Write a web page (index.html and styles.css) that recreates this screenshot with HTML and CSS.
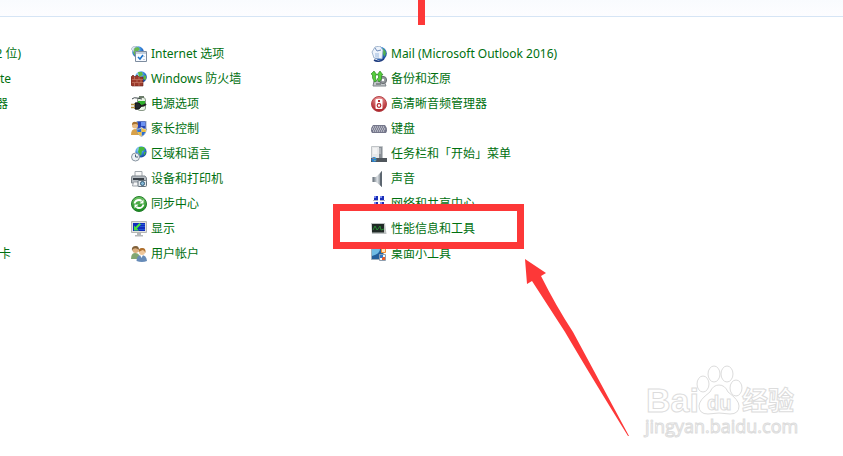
FILE: index.html
```
<!DOCTYPE html>
<html lang="zh-CN">
<head>
    <meta charset="UTF-8">
    <meta name="viewport" content="width=device-width, initial-scale=1.0">
    <title>控制面板</title>
    <link rel="stylesheet" href="styles.css">
</head>
<body>
    <svg class="defs" aria-hidden="true">
        <defs>
            <radialGradient id="globe" cx=".35" cy=".3" r=".75">
                <stop offset="0" stop-color="#b8ecff"/>
                <stop offset=".5" stop-color="#3d8fe0"/>
                <stop offset="1" stop-color="#123f9c"/>
            </radialGradient>
            <radialGradient id="red" cx=".5" cy=".2" r=".8">
                <stop offset="0" stop-color="#f4a5a5"/>
                <stop offset="1" stop-color="#a9191f"/>
            </radialGradient>
            <linearGradient id="sync" x2="0" y2="1">
                <stop offset="0" stop-color="#72c466"/>
                <stop offset="1" stop-color="#168a1d"/>
            </linearGradient>
            <linearGradient id="metal">
                <stop offset="0" stop-color="#5c6670"/>
                <stop offset=".5" stop-color="#dde2e6"/>
                <stop offset="1" stop-color="#69737c"/>
            </linearGradient>
        </defs>
    </svg>

    <header class="toolbar"></header>

    <main class="panel">
        <ul class="column cut">
            <li class="wide"><a href="#">2 位)</a></li>
            <li><a href="#">te</a></li>
            <li class="narrow"><a href="#">器</a></li>
            <li></li>
            <li></li>
            <li></li>
            <li></li>
            <li></li>
            <li><a href="#">卡</a></li>
        </ul>

        <ul class="column">
            <li>
                <svg class="icon" viewBox="0 0 16 16">
                    <circle cx="7" cy="6" r="5.8" fill="url(#globe)"/>
                    <path d="M3 2l4-1 2 2-3 3-2 4-2-4z" fill="#67b84d"/>
                    <path d="M0 3q2-4 6-3Q2 2 3 6z" fill="#dce6ef" stroke="#8ea0b3" stroke-width=".5"/>
                    <path d="M4.500 5.500h11v10h-11z" fill="#f7faff" stroke="#7d8c9f"/>
                    <path d="M5 6h10v2H5z" fill="#c3cfdd"/>
                    <path d="M7 11l2 2 3-4" fill="none" stroke="#1672cc" stroke-width="1.500"/>
                    <path d="M13 10v1M13 13v1" stroke="#8fa3bc"/>
                </svg>
                <a href="#">Internet 选项</a>
            </li>
            <li>
                <svg class="icon" viewBox="0 0 16 16">
                    <circle cx="10" cy="6" r="5.800" fill="url(#globe)"/>
                    <path d="M7 1l4 0 1 3-4 2zM13 4l2 1v4l-3-1z" fill="#5dbb45"/>
                    <path d="M0 6l2-2 2 2 2-2 2 2h4v9H1L0 14z" fill="#9c3a2b" stroke="#64231b" stroke-width=".6"/>
                    <path d="M1 8.500h11M1 11.500h11M3.500 6v2.500M8 6v2.500M6 9v2.500M10 9v2.500M3.500 12v3M8 12v3" stroke="#d08a74" stroke-width=".6"/>
                </svg>
                <a href="#">Windows 防火墙</a>
            </li>
            <li>
                <svg class="icon" viewBox="0 0 16 16">
                    <rect x="6.500" y="1.500" width="8" height="13" rx="2.500" fill="#e9f3e5" stroke="#8a9a88"/>
                    <rect x="8" y="0" width="5" height="2" fill="#6b7c69"/>
                    <path d="M7 5h7v5H7z" fill="#2fae2b"/>
                    <path d="M4 7q5-1 6 3-1 4-6 3z" fill="#24292d" stroke="#111"/>
                    <path d="M0 8.500h4M0 11.500h4" stroke="#b99542" stroke-width="1.500"/>
                    <path d="M10 10q3 0 5-2" fill="none" stroke="#222" stroke-width="1.800"/>
                    <path d="M1 3q2-2 5-1l5 1" fill="none" stroke="#40494c"/>
                </svg>
                <a href="#">电源选项</a>
            </li>
            <li>
                <svg class="icon" viewBox="0 0 16 16">
                    <path d="M6 0h9v9H6z" fill="#2745b7" stroke="#9aabc5"/>
                    <path d="M10 1h4v4h-4z" fill="#6b92f0"/>
                    <circle cx="4" cy="4.500" r="3" fill="#e7bb82"/>
                    <path d="M1 4q0-4 4-3 2 0 2 3-2-2-6 0z" fill="#a6712f"/>
                    <path d="M0 14q0-6 4-6t5 6z" fill="#d8a149"/>
                    <path d="M5.500 8q3 0 5-2 2 2 5 2-1 6-5 7.500-4-1.500-5-7.500z" fill="#f3f5f7" stroke="#7b8998" stroke-width=".6"/>
                    <path d="M10.500 7v4H6.500L6 8.500q3 0 4.500-1.500zM10.500 11h4q-1 3-4 4z" fill="#2e6fce"/>
                    <path d="M10.500 7q2 1.500 4.500 1.500l-.5 2.500h-4zM6.500 11h4v4q-3-1-4-4z" fill="#f0c041"/>
                </svg>
                <a href="#">家长控制</a>
            </li>
            <li>
                <svg class="icon" viewBox="0 0 16 16">
                    <circle cx="10" cy="5.800" r="5.600" fill="url(#globe)"/>
                    <path d="M8 1l5 0 1 3-3 1-1 5-3-4zM13 6l2 0-2 4z" fill="#46b83c"/>
                    <circle cx="4.500" cy="11" r="4" fill="#edf2f6" stroke="#8794a0"/>
                    <path d="M4.500 8.500V11h2.500" fill="none" stroke="#4d6075"/>
                </svg>
                <a href="#">区域和语言</a>
            </li>
            <li>
                <svg class="icon" viewBox="0 0 16 16">
                    <path d="M4 .5h7v6H4z" fill="#fafafa" stroke="#a1a7ad"/>
                    <path d="M1 5h13l1.500 2v5H.5V7z" fill="#b6bcc2" stroke="#7d848b"/>
                    <path d="M2 7h11v2H2z" fill="#3a4148"/>
                    <path d="M2.500 11h6v4h-7z" fill="#f6f7f8" stroke="#9ba1a8"/>
                    <rect x="7" y="9.500" width="8.500" height="6" rx="1" fill="#e3e8ec" stroke="#65717b"/>
                    <circle cx="11.500" cy="12.500" r="2" fill="#86b9d8" stroke="#315975"/>
                </svg>
                <a href="#">设备和打印机</a>
            </li>
            <li>
                <svg class="icon" viewBox="0 0 16 16">
                    <circle cx="8" cy="8" r="7.500" fill="url(#sync)" stroke="#227d2a"/>
                    <path d="M3.500 7.500Q4.500 4 8 4q1.500 0 2.500 1M12.500 8.500Q11.500 12 8 12q-1.500 0-2.500-1" fill="none" stroke="#fff" stroke-width="1.800"/>
                    <path d="M12.500 3.500v4H8.500zM3.500 12.500v-4h4z" fill="#fff"/>
                </svg>
                <a href="#">同步中心</a>
            </li>
            <li>
                <svg class="icon" viewBox="0 0 16 16">
                    <path d="M.5.500h15v11H.5z" fill="#e1e2df" stroke="#b4b6b5"/>
                    <path d="M2 2h12v8H2z" fill="#102cbc"/>
                    <path d="M7 3.500h7M9 5.500h5M8 8.500h6" stroke="#2b60dd" stroke-width=".8"/>
                    <path d="M3 9.500V4.500l1.500 1.500L8.500 2l1.500 1.500L6 7.500l2 2z" fill="#48e142"/>
                    <path d="M6 12h4v2h2v1.500H4V14h2z" fill="#b5b8b9"/>
                </svg>
                <a href="#">显示</a>
            </li>
            <li>
                <svg class="icon" viewBox="0 0 16 16">
                    <circle cx="4.500" cy="4" r="3" fill="#dcae7e"/>
                    <path d="M1 5q-1-5 4-5 3 0 3 4-3-3-6-1z" fill="#806039"/>
                    <path d="M0 13q0-6 4-6 5 0 5 6z" fill="#82a672"/>
                    <circle cx="11" cy="6" r="3" fill="#efc79b"/>
                    <path d="M7.500 6q0-4.500 4-4 3.500 0 3 5-1-3-3-3-2 1-4 2z" fill="#b0702d"/>
                    <path d="M5.500 15q0-6 5-6t5.500 6q-5 2-10.500 0z" fill="#668bb8"/>
                    <path d="M9 9h3l-1.500 3z" fill="#fff"/>
                </svg>
                <a href="#">用户帐户</a>
            </li>
        </ul>

        <ul class="column">
            <li>
                <svg class="icon" viewBox="0 0 16 16">
                    <circle cx="9" cy="7.500" r="6.800" fill="url(#globe)"/>
                    <path d="M12 2l3 4-1 5-2-3z" fill="#4eae51"/>
                    <path d="M1 6l3-5 5-1 3 4-1 9-8-1z" fill="#edf3fb" stroke="#91a7c3" stroke-width=".8"/>
                    <path d="M4 2l2 3 4-1" fill="none" stroke="#6f8cba"/>
                    <path d="M4 7l4 0 0 5-4-1z" fill="#c3d5ec"/>
                    <path d="M3 14q5 3 10-1" fill="none" stroke="#203e80" stroke-width="1.500"/>
                </svg>
                <a href="#">Mail (Microsoft Outlook 2016)</a>
            </li>
            <li>
                <svg class="icon" viewBox="0 0 16 16">
                    <path d="M3 10h10l2 5H2z" fill="#c3c7ca" stroke="#7c8287"/>
                    <circle cx="12" cy="9" r="3.600" fill="#92979b" stroke="#686d71"/>
                    <circle cx="12" cy="9" r="1.200" fill="#fff"/>
                    <path d="M0 3l3-3 3 4H4.500v3l1 3-2 1-2-4V4z" fill="#55ce3b" stroke="#227b1c" stroke-width=".6"/>
                    <path d="M9 0l3 4h-1.500v4L8 11 6 8l1.500-1V4H6z" fill="#55ce3b" stroke="#227b1c" stroke-width=".6"/>
                    <path d="M5 13h5" stroke="#4a5055"/>
                </svg>
                <a href="#">备份和还原</a>
            </li>
            <li>
                <svg class="icon" viewBox="0 0 16 16">
                    <circle cx="8" cy="8" r="7.500" fill="url(#red)" stroke="#b44449"/>
                    <rect x="4.500" y="3" width="7" height="10" rx="1" fill="#fff"/>
                    <rect x="7" y="4" width="2" height="2" fill="#b62c30"/>
                    <circle cx="8" cy="9.500" r="1.800" fill="none" stroke="#b62c30" stroke-width="1.200"/>
                </svg>
                <a href="#">高清晰音频管理器</a>
            </li>
            <li>
                <svg class="icon" viewBox="0 0 16 16">
                    <path d="M2 4h12q2 2 2 6l-1 2H1l-1-2q0-4 2-6z" fill="#74768a"/>
                    <path d="M2 6h12M1 8h14M2 10h12" stroke="#eef0f5" stroke-width="1.200" stroke-dasharray="1.200 .8"/>
                </svg>
                <a href="#">键盘</a>
            </li>
            <li>
                <svg class="icon" viewBox="0 0 16 16">
                    <path d="M.5.500h11v12H.5z" fill="#e7e8e9" stroke="#c0c4c7"/>
                    <path d="M8 1h3v11H8z" fill="#8a9097"/>
                    <path d="M2 3h4M2 5h4M2 7h4" stroke="#fff"/>
                    <path d="M8 3h2M8 5h2M8 7h2" stroke="#d2d6da"/>
                    <path d="M0 12h16v4H0z" fill="#50565c"/>
                    <circle cx="3" cy="13.500" r="2.500" fill="#2b83d2"/>
                    <path d="M1 13l2-1v1z" fill="#ef6845"/>
                    <path d="M3.500 12l1.500 1H3.500z" fill="#80d65a"/>
                    <path d="M3.500 14H5l-1.500 1z" fill="#ffd34a"/>
                </svg>
                <a href="#">任务栏和「开始」菜单</a>
            </li>
            <li>
                <svg class="icon" viewBox="0 0 16 16">
                    <path d="M1.500 6H5l6-6v16l-6-5H1.500z" fill="url(#metal)"/>
                    <path d="M9 2.500L11 0v16l-2-2z" fill="#5c6670"/>
                </svg>
                <a href="#">声音</a>
            </li>
            <li>
                <svg class="icon" viewBox="0 0 16 16">
                    <path d="M3 0h4v4H3zM9 0h4v4H9zM3 6h4v4H3zM9 6h4v4H9z" fill="#1a2fb8"/>
                    <path d="M3 0h2v2H3zM9 0h2v2H9zM3 6h2v2H3zM9 6h2v2H9z" fill="#7c8cf0"/>
                    <path d="M2 4.500h5M9 4.500h5M2 10.500h5M9 10.500h5" stroke="#b0b3bf"/>
                </svg>
                <a href="#">网络和共享中心</a>
            </li>
            <li class="marked">
                <svg class="icon" viewBox="0 0 16 16">
                    <path d="M0 2h14l1.500 11H1z" fill="#bfc3c3"/>
                    <path d="M1 3h12v8.500H1z" fill="#202a26"/>
                    <path d="M2 9l2-4 2 4 1-1 2-3 1 4 3-1" fill="none" stroke="#2b8b35"/>
                </svg>
                <a href="#">性能信息和工具</a>
                <span class="highlight"></span>
            </li>
            <li>
                <svg class="icon" viewBox="0 0 16 16">
                    <path d="M.5 2.500h12v11H.5z" fill="#24609c" stroke="#a1b0ba"/>
                    <path d="M1 3h8q0 5-8 7z" fill="#70bce4"/>
                    <path d="M10.500 2.500h4v4h-4z" fill="#fde3c0" stroke="#f08b2b"/>
                    <path d="M8.500 8.500h6v6h-6z" fill="#f4f7fa" stroke="#8e9eaf"/>
                    <path d="M9 9h3v3H9z" fill="#3478c6"/>
                    <path d="M12 11h2v3h-3v-2z" fill="#ea5a2a"/>
                </svg>
                <a href="#">桌面小工具</a>
            </li>
        </ul>
    </main>

    <!-- annotations drawn over the panel -->
    <span class="stem"></span>
    <svg class="arrow" viewBox="0 0 106 180" aria-hidden="true">
        <path d="M1 1L22 15l-5 3q15 30 32 56l56 104h-1Q68 120 41 74L8 23l-5 3z"/>
    </svg>

    <svg class="watermark" viewBox="0 0 160 76" role="img" aria-label="Baidu 经验">
        <text class="brand" x="4" y="50">Bai</text>
        <ellipse cx="61" cy="22" rx="6" ry="8"/>
        <ellipse cx="72" cy="12" rx="6" ry="8"/>
        <ellipse cx="85" cy="12" rx="6" ry="8"/>
        <ellipse cx="94" cy="26" rx="6" ry="8"/>
        <path d="M77 23q6 0 9 7 11 8 11 14 0 8-9 8-11-2-22 0-9 0-9-8 0-6 11-14 3-7 9-7z"/>
        <text class="du" x="65" y="48">du</text>
        <text class="word" x="100" y="48">经验</text>
        <text class="site" x="3" y="71">jingyan.baidu.com</text>
    </svg>
</body>
</html>
```
FILE: styles.css
```
body {
    position: relative;
    margin: 0;
    min-height: 100vh;
    overflow: hidden;
    background-color: #fff;
    font-family: "Noto Sans", "Noto Sans CJK SC", sans-serif;
    font-size: 12px;
}
.defs {
    position: absolute;
    width: 0;
    height: 0;
}
.toolbar {
    height: 16px;
    background: linear-gradient(#f9fbfe, #fdfdff);
    border-bottom: 1px solid #d6e5f5;
}
.panel {
    display: grid;
    grid-template-columns: 131px 240px 1fr;
    padding-top: 24px;
}
.column {
    margin: 0;
    padding: 0;
    list-style: none;
}
.column li {
    display: flex;
    align-items: center;
    gap: 4px;
    height: 25px;
    line-height: 25px;
    white-space: nowrap;
}
.column a {
    color: #00700f;
    text-decoration: none;
}
.column a:hover {
    text-decoration: underline;
}
.icon {
    width: 16px;
    height: 16px;
    flex: none;
}

/* first column is scrolled off to the left, only the line ends show */
.cut li {
    justify-content: flex-end;
    width: 11px;
}
.cut .wide {
    width: 21px;
}
.cut .narrow {
    width: 8px;
}

.marked {
    position: relative;
}
.highlight {
    position: absolute;
    top: -12px;
    bottom: -8px;
    left: -38px;
    width: 191px;
    box-sizing: border-box;
    border: 7px solid #fd3838;
    pointer-events: none;
}
.stem {
    position: absolute;
    top: 0;
    left: 418px;
    width: 7px;
    height: 25px;
    background-color: #fd3838;
}
.arrow {
    position: absolute;
    top: 258px;
    left: 524px;
    width: 106px;
    height: 180px;
    fill: #fd3838;
}
.watermark {
    position: absolute;
    right: 41px;
    bottom: 18px;
    width: 160px;
    height: 76px;
    fill: #fff;
    stroke: #dcdcdc;
    stroke-width: 1px;
    overflow: visible;
}
.brand {
    font: bold 34px "Liberation Sans", sans-serif;
}
.du {
    font: bold 20px "Liberation Sans", sans-serif;
}
.word {
    font: bold 26px "Noto Sans CJK SC", sans-serif;
}
.site {
    font: 18px "Open Sans", sans-serif;
}
```
